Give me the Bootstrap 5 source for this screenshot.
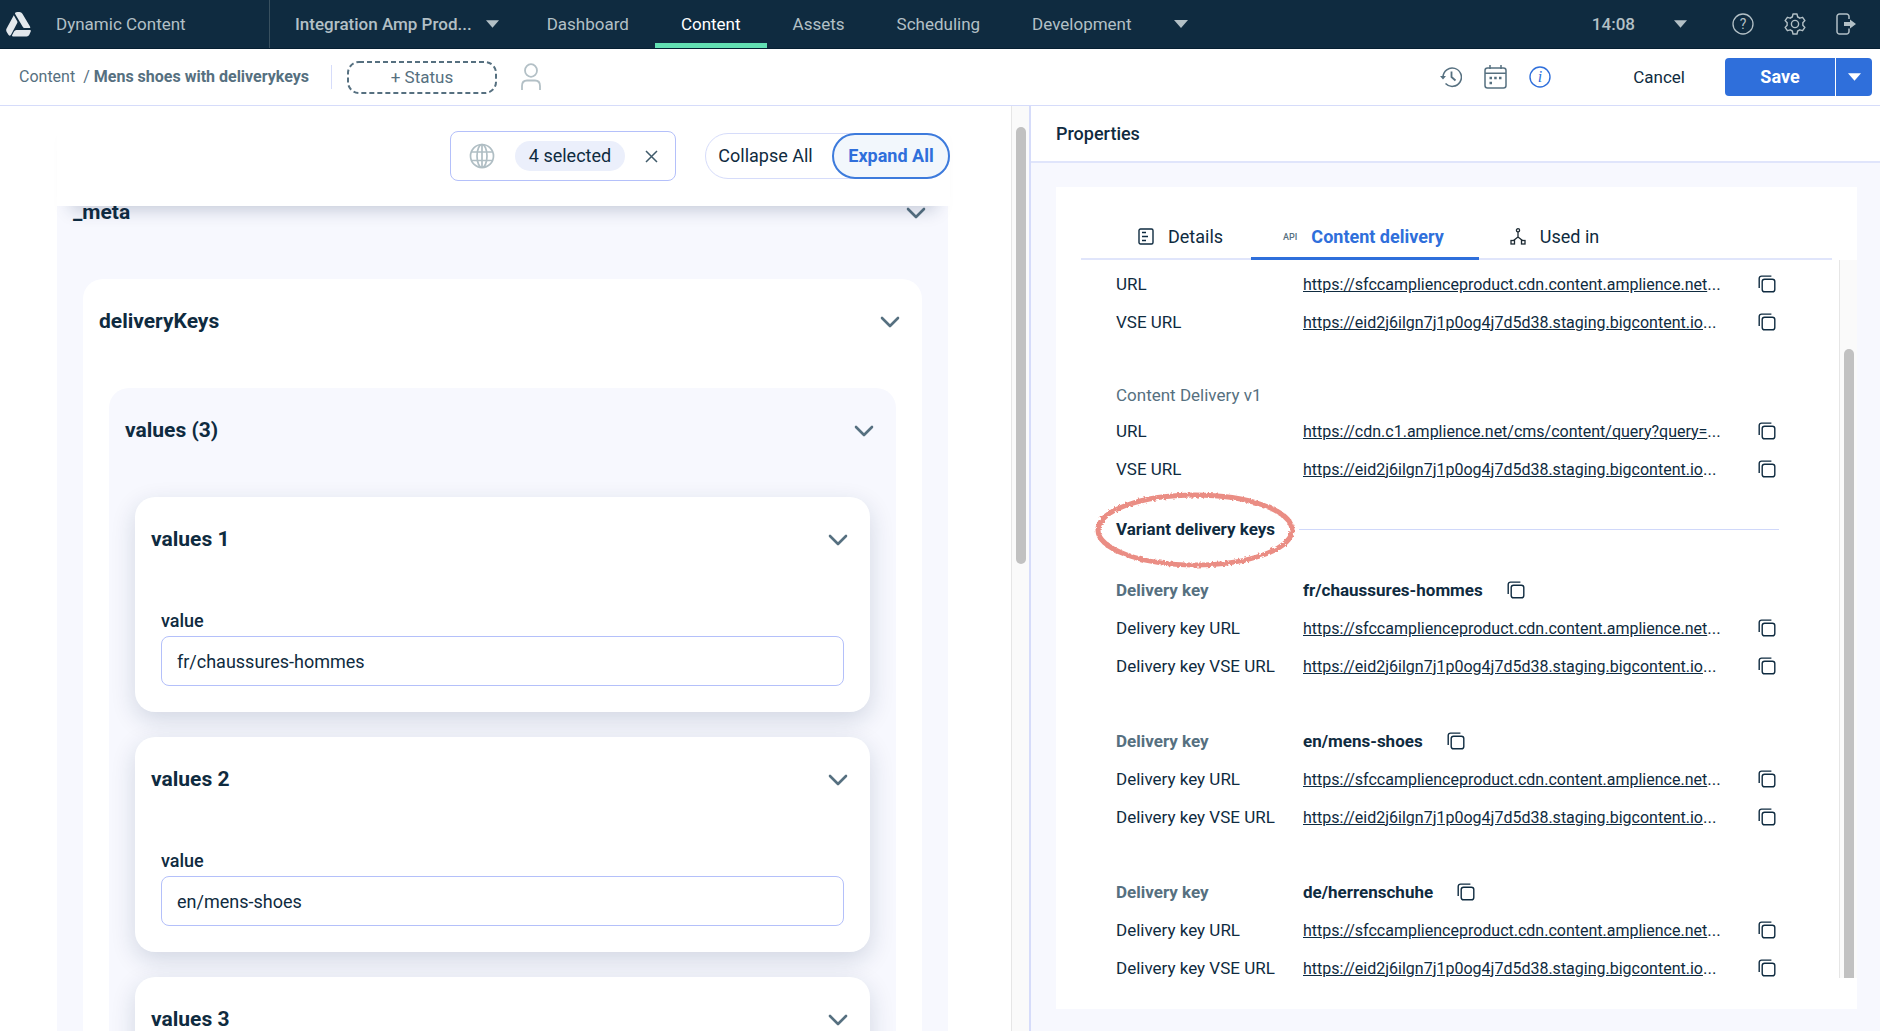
<!DOCTYPE html>
<html lang="en">
<head>
<meta charset="utf-8">
<meta name="viewport" content="width=device-width, initial-scale=1">
<title>Dynamic Content</title>
<link href="https://cdn.jsdelivr.net/npm/bootstrap@5.3.0/dist/css/bootstrap.min.css" rel="stylesheet">
<style>
:root{--ink:#0f2b40;--slate:#567080;--mist:#b3c0c6;--line:#d6dcfa;--field:#b4c0fa;--blue:#2f6fdb;--wash:#f7f8fe}
body{font-family:Roboto,"Liberation Sans",sans-serif;font-size:17px;line-height:24px;color:var(--ink);overflow:hidden}
svg{display:block;flex:none}
a{color:inherit}
.plain{border:0;background:none;padding:0;color:inherit}
.topbar{height:49px;background:var(--ink);color:var(--mist);border-bottom:1px solid #061f32}
.topbar a{text-decoration:none}
.brand-zone{width:270px;padding-left:6px;gap:25px;border-right:1px solid #38505f}
.hub{padding-left:25px;padding-right:22px;gap:14px;font-weight:500}
.topnav a{padding:0 26px;display:flex;align-items:center}
.topnav .on{color:#fff;box-shadow:inset 0 -5px #62e0b3}
.clock{font-weight:500;gap:39px;margin-right:45px}
.session{gap:30px}
.toolbar{height:57px;border-bottom:1px solid var(--line);padding:0 8px 0 19px;color:var(--slate)}
.trail{font-size:16px}
.rule-v{width:1px;height:24px;background:var(--line);margin:0 15px 0 22px}
.status-btn{width:150px;height:33px}
.status-btn rect{fill:none;stroke:var(--slate);stroke-width:2;stroke-dasharray:5 3}
.tool-icons{gap:22px}
.cancel-btn{color:var(--ink);margin:0 24px 0 66px}
.save-btn{background:var(--blue);color:#fff;height:38px;border:0;font-weight:700}
.save-main{width:110px;border-radius:4px 0 0 4px;font-size:18px}
.save-more{width:36px;border-radius:0 4px 4px 0;margin-left:1px}
.workspace{display:grid;grid-template-columns:1029fr 851fr;min-height:0}
.editor{min-height:0;overflow:hidden}
.editor-body{padding:0 63px 0 57px;min-width:0}
.editor-head{height:100px;background:#fff;position:relative;z-index:2;gap:29px;padding-top:25px;margin-right:-2px;font-size:18px;box-shadow:0 18px 16px -14px rgba(20,43,80,.22)}
.picker{height:50px;width:226px;border:1px solid var(--field);border-radius:8px;padding:0 17px 0 18px}
.pill{background:#ebeffb;border-radius:15px;height:30px;line-height:29px;padding:0 14px}
.toggle{height:46px;width:245px;border:1px solid var(--line);border-radius:23px;margin-top:2px}
.toggle button{flex:1 1 0;padding-right:8px}
.toggle .on{margin:-1px;flex:0 0 118px;padding:0;border:2px solid #3d7bdc;border-radius:23px;background:#f2f7fc;color:var(--blue);font-weight:700}
.panel{padding:0 26px 26px}
.panel-0{background:var(--wash);margin-top:-36px}
.panel-1{background:#fff;border-radius:20px}
.panel-2{background:var(--wash);border-radius:20px}
.panel-3{background:#fff;border-radius:20px;margin-bottom:25px;box-shadow:0 8px 24px rgba(20,43,80,.16)}
.panel-head{height:86px;margin:0 -4px 23px -10px}
.panel-head h2{font-size:21px;font-weight:700;margin:0}
.panel-3 .panel-head{margin-bottom:26px}
.panel-3 label{font-weight:500;font-size:18px;display:block;margin-bottom:3px}
.panel-3 input{height:50px;border:1px solid var(--field);border-radius:8px;padding:0 15px;font-size:18px;color:var(--ink)}
.track{background:#fafafa;border-left:1px solid #e6e6e6;padding:0 3px 0 4px;width:18px}
.thumb{background:#c1c1c1;border-radius:5px;width:10px}
.track-main{padding-top:21px}
.track-main .thumb{height:437px}
.props{border-left:2px solid var(--line);background:var(--wash);min-height:0}
.props-title{height:57px;background:#fff;border-bottom:2px solid #e0e5fb;padding-left:25px;font-weight:500;font-size:18px}
.sheet{background:#fff;margin:24px 23px 22px 25px;min-height:0;padding-bottom:31px}
.tabs{margin:26px 25px 0;height:47px;border-bottom:2px solid #e0e5fb;font-size:18px}
.tabs button{padding:0 28px 0 31px;gap:14px;display:flex;align-items:center;margin-bottom:-2px;height:47px}
.tabs .tab-first{padding-left:57px}
.tabs .on{color:var(--blue);font-weight:700;border-bottom:3px solid var(--blue);padding:3px 35px 0 32px}
.api{font-size:9px;font-weight:500;color:var(--slate)}
.listing{padding:5px 60px 0;min-width:0;overflow:hidden}
.kv{height:38px;display:grid;grid-template-columns:187px 1fr 21px;align-items:center}
.kv a{font-size:16px}
.kv b{font-weight:700}
.kv .key{color:var(--slate)}
.group{margin-bottom:37px}
.group-title{height:34px;color:var(--slate)}
.variant{height:83px;margin-top:-37px;position:relative;gap:24px}
.variant h3{font-size:17px;font-weight:700;margin:0}
.variant hr{flex:1;margin:0;border-color:#d0d8fa;opacity:1}
.ring{position:absolute;left:-22px;top:2px}
.track-side{padding-top:89px}
.track-side .thumb{height:100%;border-radius:5px 5px 0 0}
</style>
</head>
<body class="vh-100 d-flex flex-column bg-white">
<svg width="0" height="0" class="position-absolute" aria-hidden="true">
  <symbol id="copy" viewBox="0 0 18 18"><g fill="none" stroke="#0f2b40" stroke-width="1.4"><rect x="4.2" y="4.2" width="12.6" height="12.6" rx="2.4"/><path d="M1.2 13V3.4A2.3 2.3 0 0 1 3.5 1.1H13.4"/></g></symbol>
  <symbol id="chev" viewBox="0 0 20 12"><path d="M2 2l8 8 8-8" fill="none" stroke="#567080" stroke-width="2.6" stroke-linecap="round" stroke-linejoin="round"/></symbol>
  <symbol id="caret" viewBox="0 0 14 8"><path d="M0 0h14L7 8z" fill="currentColor"/></symbol>
</svg>

<header class="topbar d-flex flex-shrink-0">
  <a href="#" class="brand-zone d-flex align-items-center">
    <svg width="25" height="25" viewBox="0 0 25 25" fill="#e3e8ec"><path d="M9.200.8Q10 0 11.500 0H13.500Q15.400 0 16.400 1.800L24 14.600Q24.600 16 24 16H18.400Q17.400 16 16.700 14.800L9.300 2.300Q8.700 1.400 9.200.8Z"/><path d="M7.800 3.300L11.200 9.200Q11.700 10.100 11.200 11L5.300 22.300Q4.300 24.500 2.600 23.100L.7 19.900Q-.3 18.200.6 16.500Z"/><path d="M10.300 18H23.900Q25.600 18 24.500 20L23.300 22.800Q22.500 24.500 20.600 24.500H7.200Q5.400 24.500 6.300 22.800L8 19.500Q8.800 18 10.300 18Z"/></svg>
    <span>Dynamic Content</span>
  </a>
  <button class="plain hub d-flex align-items-center">Integration Amp Prod... <svg width="13" height="8"><use href="#caret"/></svg></button>
  <nav class="topnav d-flex">
    <a href="#">Dashboard</a><a href="#" class="on">Content</a><a href="#">Assets</a><a href="#">Scheduling</a><a href="#">Development</a>
  </nav>
  <button class="plain ms-3" aria-label="More"><svg width="14" height="8"><use href="#caret"/></svg></button>
  <div class="ms-auto d-flex align-items-center pe-4">
    <button class="plain clock d-flex align-items-center">14:08<svg width="13" height="8"><use href="#caret"/></svg></button>
    <div class="session d-flex">
    <button class="plain" aria-label="Help"><svg width="22" height="22" viewBox="0 0 22 22"><circle cx="11" cy="11" r="10" fill="none" stroke="currentColor" stroke-width="1.300"/><text x="11" y="16" text-anchor="middle" font-size="14" fill="currentColor">?</text></svg></button>
    <button class="plain" aria-label="Settings"><svg width="22" height="22" viewBox="0 0 22 22" fill="none" stroke="currentColor" stroke-width="1.400" stroke-linejoin="round"><circle cx="11" cy="11" r="3.600"/><path d="M9 1H13L13.700 4Q15 4.500 15.800 5.200L18.600 4.300L20.900 7.600L18.800 9.700Q19 11 18.800 12.300L20.900 14.400L18.600 17.700L15.800 16.800Q15 17.500 13.700 18L13 21H9L8.300 18Q7 17.500 6.200 16.800L3.400 17.700L1.100 14.400L3.200 12.300Q3 11 3.200 9.700L1.100 7.600L3.400 4.300L6.200 5.200Q7 4.500 8.300 4Z"/></svg></button>
    <button class="plain" aria-label="Sign out"><svg width="20" height="22" viewBox="0 0 20 22" fill="none" stroke="currentColor" stroke-width="1.500"><path d="M13 6V3.500A2.500 2.500 0 0 0 10.500 1H3.500A2.500 2.500 0 0 0 1 3.500V18.500A2.500 2.500 0 0 0 3.500 21H10.500A2.500 2.500 0 0 0 13 18.500V15.500"/><path d="M8 9h6V6.500l6 4.500-6 4.500V13H8z" fill="currentColor" stroke="none"/></svg></button>
    </div>
  </div>
</header>

<div class="toolbar d-flex align-items-center flex-shrink-0">
  <nav aria-label="Breadcrumb" class="trail d-flex"><a href="#" class="text-decoration-none">Content</a><span class="ms-2 me-1">/</span><span class="fw-bold">Mens shoes with deliverykeys</span></nav>
  <div class="rule-v"></div>
  <button class="plain status-btn position-relative"><svg class="position-absolute top-0 start-0" width="150" height="33"><rect x="1" y="1" width="148" height="31" rx="11"/></svg>+ Status</button>
  <button class="plain ms-4" aria-label="Assignee"><svg width="20" height="28" viewBox="0 0 20 28" fill="none" stroke="#b3c0c6" stroke-width="1.800"><ellipse cx="10" cy="7.500" rx="6" ry="6.300"/><path d="M1 27V23Q1 17.500 6 17.500H14Q19 17.500 19 23V27"/></svg></button>
  <div class="ms-auto d-flex align-items-center">
    <div class="tool-icons d-flex align-items-center">
    <button class="plain" aria-label="History"><svg width="22" height="22" viewBox="0 0 22 22" fill="none" stroke="#567080" stroke-width="1.500"><path d="M3 11A9.200 9.200 0 1 1 5.500 17.500"/><path d="M0 10h6l-3 3.500z" fill="#567080" stroke="none"/><path d="M11.500 5.500V11l4 3.500" stroke-width="1.800"/></svg></button>
    <button class="plain" aria-label="Schedule"><svg width="23" height="24" viewBox="0 0 23 24" fill="none" stroke="#567080" stroke-width="1.500"><rect x="1" y="3" width="21" height="20" rx="2.500"/><path d="M1 8.200H22M6 0V4M17 0V4"/><path d="M5.500 13h2.500M10.200 13h2.500M15 13h2.500M5.500 18h2.500" stroke-width="2.500"/></svg></button>
    <button class="plain" aria-label="Information"><svg width="22" height="22" viewBox="0 0 22 22"><circle cx="11" cy="11" r="10" fill="none" stroke="#2f6fdb" stroke-width="1.400"/><text x="11" y="16" text-anchor="middle" font-size="16" font-style="italic" font-family="Liberation Serif,serif" fill="#2f6fdb">i</text></svg></button>
    </div>
    <button class="plain cancel-btn px-3">Cancel</button>
    <button class="save-btn save-main">Save</button><button class="save-btn save-more" aria-label="Save options"><svg class="mx-auto" width="13" height="8"><use href="#caret"/></svg></button>
  </div>
</div>

<main class="workspace flex-grow-1">
  <section class="editor d-flex">
    <div class="editor-body flex-grow-1">
      <div class="editor-head d-flex justify-content-end align-items-start">
        <div class="picker d-flex align-items-center justify-content-between">
          <svg width="26" height="26" viewBox="0 0 26 26" fill="none" stroke="#b0bec4" stroke-width="1.700"><circle cx="13" cy="13" r="11.500"/><ellipse cx="13" cy="13" rx="5" ry="11.500"/><path d="M13 1.500V24.500M2.500 9H23.500M2.500 17.500H23.500"/></svg>
          <span class="pill">4 selected</span>
          <button class="plain" aria-label="Clear"><svg width="13" height="13" viewBox="0 0 13 13"><path d="M1 1l11 11M12 1L1 12" stroke="#3f5a6a" stroke-width="1.500"/></svg></button>
        </div>
        <div class="toggle d-flex">
          <button class="plain">Collapse All</button><button class="plain on">Expand All</button>
        </div>
      </div>
      <div class="panel panel-0">
        <div class="panel-head d-flex align-items-center justify-content-between"><h2>_meta</h2><button class="plain" aria-label="Toggle"><svg width="20" height="12"><use href="#chev"/></svg></button></div>
        <div class="panel panel-1">
          <div class="panel-head d-flex align-items-center justify-content-between"><h2>deliveryKeys</h2><button class="plain" aria-label="Toggle"><svg width="20" height="12"><use href="#chev"/></svg></button></div>
          <div class="panel panel-2">
            <div class="panel-head d-flex align-items-center justify-content-between"><h2>values (3)</h2><button class="plain" aria-label="Toggle"><svg width="20" height="12"><use href="#chev"/></svg></button></div>
            <div class="panel panel-3">
              <div class="panel-head d-flex align-items-center justify-content-between"><h2>values 1</h2><button class="plain" aria-label="Toggle"><svg width="20" height="12"><use href="#chev"/></svg></button></div>
              <label for="v1">value</label><input id="v1" class="w-100 d-block" value="fr/chaussures-hommes">
            </div>
            <div class="panel panel-3">
              <div class="panel-head d-flex align-items-center justify-content-between"><h2>values 2</h2><button class="plain" aria-label="Toggle"><svg width="20" height="12"><use href="#chev"/></svg></button></div>
              <label for="v2">value</label><input id="v2" class="w-100 d-block" value="en/mens-shoes">
            </div>
            <div class="panel panel-3">
              <div class="panel-head d-flex align-items-center justify-content-between"><h2>values 3</h2><button class="plain" aria-label="Toggle"><svg width="20" height="12"><use href="#chev"/></svg></button></div>
            </div>
          </div>
        </div>
      </div>
    </div>
    <div class="track track-main flex-shrink-0"><div class="thumb"></div></div>
  </section>

  <aside class="props d-flex flex-column">
    <div class="props-title d-flex align-items-center flex-shrink-0">Properties</div>
    <div class="sheet flex-grow-1 d-flex flex-column">
      <div class="tabs d-flex flex-shrink-0" role="tablist">
        <button class="plain tab-first" role="tab"><svg width="16" height="17" viewBox="0 0 16 17" fill="none" stroke="#0f2b40" stroke-width="1.400"><rect x="1" y="1" width="14" height="15" rx="1.500"/><path d="M4 4.500h4M4 8.500h6M4 12.500h4"/></svg>Details</button>
        <button class="plain on" role="tab"><span class="api">API</span>Content delivery</button>
        <button class="plain" role="tab"><svg width="16" height="17" viewBox="0 0 16 17" fill="none" stroke="#1d2a33" stroke-width="1.300"><circle cx="8" cy="2.300" r="1.600"/><path d="M8 4V9L3.500 12.500M8 9l4.500 3.500"/><rect x="1" y="12.500" width="3.500" height="3.500"/><rect x="11.500" y="12.500" width="3.500" height="3.500"/></svg>Used in</button>
      </div>
      <div class="d-flex flex-grow-1" style="min-height:0">
        <div class="listing flex-grow-1">
          <div class="group">
            <div class="kv"><span>URL</span><span><a href="#">https://sfccamplienceproduct.cdn.content.amplience.net</a>...</span><button class="plain" aria-label="Copy"><svg width="18" height="18"><use href="#copy"/></svg></button></div>
            <div class="kv"><span>VSE URL</span><span><a href="#">https://eid2j6ilgn7j1p0og4j7d5d38.staging.bigcontent.io</a>...</span><button class="plain" aria-label="Copy"><svg width="18" height="18"><use href="#copy"/></svg></button></div>
          </div>
          <div class="group">
            <div class="group-title d-flex align-items-center">Content Delivery v1</div>
            <div class="kv"><span>URL</span><span><a href="#">https://cdn.c1.amplience.net/cms/content/query?query=</a>...</span><button class="plain" aria-label="Copy"><svg width="18" height="18"><use href="#copy"/></svg></button></div>
            <div class="kv"><span>VSE URL</span><span><a href="#">https://eid2j6ilgn7j1p0og4j7d5d38.staging.bigcontent.io</a>...</span><button class="plain" aria-label="Copy"><svg width="18" height="18"><use href="#copy"/></svg></button></div>
          </div>
          <div class="variant d-flex align-items-center"><h3>Variant delivery keys</h3><hr>
            <svg class="ring" width="202" height="80" viewBox="0 0 202 80"><filter id="rough" x="-5%" y="-10%" width="110%" height="120%"><feTurbulence type="fractalNoise" baseFrequency=".35" numOctaves="2" seed="4"/><feDisplacementMap in="SourceGraphic" scale="4"/></filter><ellipse cx="101" cy="40" rx="97" ry="35" fill="none" stroke="#ea8d84" stroke-width="5" filter="url(#rough)"/></svg>
          </div>
          <div class="group">
            <div class="kv"><b class="key">Delivery key</b><span class="d-flex align-items-center"><b class="me-4">fr/chaussures-hommes</b><button class="plain" aria-label="Copy"><svg width="18" height="18"><use href="#copy"/></svg></button></span></div>
            <div class="kv"><span>Delivery key URL</span><span><a href="#">https://sfccamplienceproduct.cdn.content.amplience.net</a>...</span><button class="plain" aria-label="Copy"><svg width="18" height="18"><use href="#copy"/></svg></button></div>
            <div class="kv"><span>Delivery key VSE URL</span><span><a href="#">https://eid2j6ilgn7j1p0og4j7d5d38.staging.bigcontent.io</a>...</span><button class="plain" aria-label="Copy"><svg width="18" height="18"><use href="#copy"/></svg></button></div>
          </div>
          <div class="group">
            <div class="kv"><b class="key">Delivery key</b><span class="d-flex align-items-center"><b class="me-4">en/mens-shoes</b><button class="plain" aria-label="Copy"><svg width="18" height="18"><use href="#copy"/></svg></button></span></div>
            <div class="kv"><span>Delivery key URL</span><span><a href="#">https://sfccamplienceproduct.cdn.content.amplience.net</a>...</span><button class="plain" aria-label="Copy"><svg width="18" height="18"><use href="#copy"/></svg></button></div>
            <div class="kv"><span>Delivery key VSE URL</span><span><a href="#">https://eid2j6ilgn7j1p0og4j7d5d38.staging.bigcontent.io</a>...</span><button class="plain" aria-label="Copy"><svg width="18" height="18"><use href="#copy"/></svg></button></div>
          </div>
          <div class="group mb-0">
            <div class="kv"><b class="key">Delivery key</b><span class="d-flex align-items-center"><b class="me-4">de/herrenschuhe</b><button class="plain" aria-label="Copy"><svg width="18" height="18"><use href="#copy"/></svg></button></span></div>
            <div class="kv"><span>Delivery key URL</span><span><a href="#">https://sfccamplienceproduct.cdn.content.amplience.net</a>...</span><button class="plain" aria-label="Copy"><svg width="18" height="18"><use href="#copy"/></svg></button></div>
            <div class="kv"><span>Delivery key VSE URL</span><span><a href="#">https://eid2j6ilgn7j1p0og4j7d5d38.staging.bigcontent.io</a>...</span><button class="plain" aria-label="Copy"><svg width="18" height="18"><use href="#copy"/></svg></button></div>
          </div>
        </div>
        <div class="track track-side flex-shrink-0"><div class="thumb"></div></div>
      </div>
    </div>
  </aside>
</main>
<script src="https://cdn.jsdelivr.net/npm/bootstrap@5.3.0/dist/js/bootstrap.bundle.min.js"></script>
</body>
</html>
